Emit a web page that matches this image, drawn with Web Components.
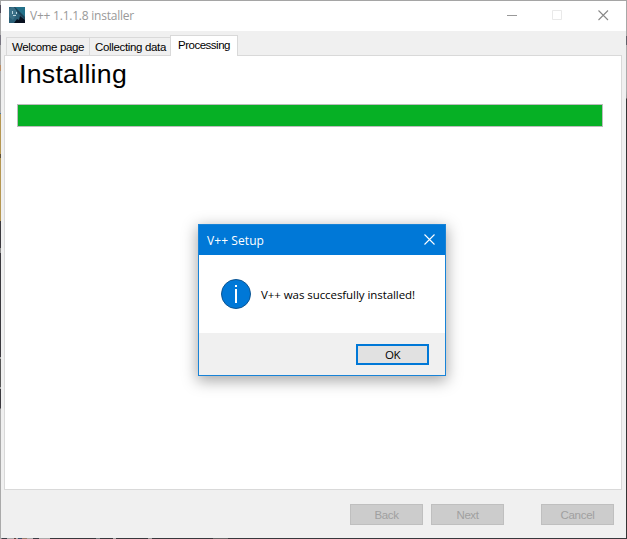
<!DOCTYPE html>
<html lang="en"><head><meta charset="utf-8"><title>V++ installer</title>
<style>
html,body{margin:0;width:627px;height:539px;overflow:hidden}
body{font-family:"Liberation Sans",Arial,sans-serif;font-size:11.5px;color:#000}
</style></head><body>
<installer-app></installer-app>
<script>
// Inline text set to a fixed advance width by adjusting its tracking.
customElements.define('fit-text', class extends HTMLElement{
  connectedCallback(){
    const r=this.attachShadow({mode:'open'});
    r.innerHTML=`<style>:host{display:inline-block;white-space:pre}span{display:inline-block}</style><span></span>`;
    const s=r.querySelector('span'); s.textContent=this.getAttribute('text');
    const w=+this.getAttribute('w'), n=s.textContent.length;
    this.style.width=w+'px';
    s.style.letterSpacing=((w-s.getBoundingClientRect().width)/n)+'px';
  }
});
customElements.define('push-button', class extends HTMLElement{
  connectedCallback(){
    this.attachShadow({mode:'open'}).innerHTML=`<style>
    :host{display:flex;box-sizing:border-box;width:73px;height:21px;align-items:center;justify-content:center;background:#ccc;border:1px solid #bfbfbf;color:#a0a0a0;line-height:19px;padding-top:1px}
    :host([primary]){background:#e1e1e1;border:2px solid #0078d7;color:#000;line-height:17px;padding-top:0}
    </style><slot></slot>`;
  }
});
customElements.define('app-logo', class extends HTMLElement{
  connectedCallback(){
    this.attachShadow({mode:'open'}).innerHTML=`<style>:host{display:block;width:16px;height:16px}svg{display:block}</style>
    <svg width="16" height="16" viewBox="0 0 16 16"><path fill="#2a5f77" d="M0 0h16v16H0z"/><path fill="#227089" d="M5 0h11v12z"/><path fill="#3b7087" d="M0 2l3-2h2l4 5-5 8-4-3z"/><path fill="#1d4358" d="M5 0h1l10 10v3l-7-7z"/><path fill="#08101f" d="M11 9l5 4v3H5l3-4 2 1z"/><path fill="#b9d4de" d="M3 4h1v3H3zM4 8h3v1H4zM7 5h1v2H7z"/></svg>`;
  }
});
customElements.define('tab-item', class extends HTMLElement{
  connectedCallback(){
    this.attachShadow({mode:'open'}).innerHTML=`<style>
    :host{display:block;box-sizing:border-box;height:18px;padding:2px 0 0 5px;border:1px solid #d9d9d9;border-bottom:0;background:#f0f0f0;line-height:14px}
    :host([active]){height:21px;background:#fff;margin-bottom:-1px;padding-left:7px;padding-top:2px;z-index:1}
    </style><slot></slot>`;
  }
});
customElements.define('message-dialog', class extends HTMLElement{
  connectedCallback(){
    this.attachShadow({mode:'open'}).innerHTML=`<style>
    :host{display:flex;flex-direction:column;box-sizing:border-box;width:248px;height:152px;border:1px solid #1883d7;background:#fff;box-shadow:0 4px 14px 1px rgba(0,0,0,.34);font-family:"Open Sans","Noto Sans",sans-serif}
    header{height:30px;background:#0078d7;color:#fff;display:flex;align-items:center;justify-content:space-between;padding:0 10px 0 8px;font-size:12px}
    header svg{margin-top:-2px}
    main{height:78px;display:flex;align-items:center;padding-left:22px;gap:10px;font-size:11.5px}
    main fit-text{padding-top:1px}
    footer{flex:1;background:#f0f0f0;display:flex;justify-content:flex-end;padding:11px 16px 0 0;font-size:11.5px}
    svg{display:block}
    </style>
    <header><fit-text text="V++ Setup" w="57"></fit-text>
    <svg width="11" height="11" viewBox="0 0 11 11"><path d="M.5.5l10 10M10.500.5l-10 10" stroke="#fff" stroke-width="1.100"/></svg></header>
    <main><svg width="30" height="30" viewBox="0 0 30 30"><circle cx="15" cy="15" r="14.500" fill="#0078d7" stroke="#0c5492"/><path fill="#fff" d="M14 10h2v14h-2zM14 6h2v2h-2z"/></svg>
    <fit-text text="V++ was succesfully installed!" w="154"></fit-text></main>
    <footer><push-button primary><fit-text text="OK" w="15"></fit-text></push-button></footer>`;
  }
});
customElements.define('installer-app', class extends HTMLElement{
  connectedCallback(){
    this.attachShadow({mode:'open'}).innerHTML=`<style>
    :host{display:flex;flex-direction:column;box-sizing:border-box;position:relative;width:627px;height:539px;padding:1px;
     background:
      linear-gradient(#a5a5a5,#a5a5a5) 0 0/100% 1px no-repeat,
      linear-gradient(#a8a8a8 0 36px,#5f6068 36px 45px,#aaa 45px 90px,#999 98px,#343434 99px) 100% 0/1px 100% no-repeat,
      linear-gradient(#a5a5a5 0 5px,#4f4c5b 5px 13px,#aaa 13px 35px,#777480 35px 45px,#aaa 45px 65px,#b98d65 65px 71px,#aaa 71px 113px,#4e79a1 113px 114px,#b59652 114px 154px,#625136 154px 158px,#b59652 158px 221px,#3b393e 221px 248px,#8e8e8e 248px 253px,#3b393e 253px 357px,#aaa 357px 359px,#555 359px 387px,#aaa 387px 389px,#3b393e 389px 408px,#aaa 409px) 0 0/1px 100% no-repeat,
      linear-gradient(90deg,#777 0 2px,#3c3c45 2px 7px,#aaa 7px 14px,#653f39 14px 16px,#aaa 16px 18px,#394e6a 18px 22px,#9a7d6d 22px 27px,#aaa 27px 33px,#3c3c45 33px 39px,#aaa 39px 50px,#38383c 50px 96px,#777f83 96px 100px,#38383c 100px 113px,#aaa 113px 116px,#38383c 116px 148px,#999 148px 152px,#38383c 152px 213px,#666 213px 228px,#38383c 228px) 0 100%/100% 1px no-repeat #f0f0f0}
    header{height:30px;flex:none;background:#fff;display:flex;align-items:center;padding-left:8px;gap:5px;color:#999;font:12px/20px "Open Sans","Noto Sans",sans-serif}
    header svg{margin-left:auto}
    header app-logo{margin-top:-2px}
    .body{flex:1;display:flex;flex-direction:column;background:#f0f0f0;padding:4px 4px 0 3px}
    nav{display:flex;align-items:flex-end;height:20px;padding-left:2px}
    nav tab-item+tab-item{margin-left:-1px}
    section{height:435px;box-sizing:border-box;border:1px solid #d9d9d9;background:#fff;padding:2px 18px 0 12px}
    h1{margin:0;padding-left:2px;height:46px;font-size:26.67px;font-weight:400;line-height:33px}
    .bar{height:23px;box-sizing:border-box;border:1px solid #bcbcbc;background:#06b025;width:586px}
    footer{display:flex;justify-content:flex-end;padding:14px 8px 0 0}
    .next{margin:0 37px 0 8px}
    message-dialog{position:absolute;left:198px;top:224px}
    </style>
    <header><app-logo></app-logo><fit-text text="V++ 1.1.1.8 installer" w="104"></fit-text>
    <svg width="119" height="30" viewBox="0 0 119 30" fill="none"><path d="M0 14.500h10" stroke="#999"/><path d="M45.500 9.500h9v9h-9z" stroke="#e9e9e9"/><path d="M91.500 9.500l9.500 9.500M101 9.500L91.500 19" stroke="#888" stroke-width="1.100"/></svg></header>
    <div class="body"><nav>
      <tab-item style="width:84px"><fit-text text="Welcome page" w="72"></fit-text></tab-item>
      <tab-item style="width:82px"><fit-text text="Collecting data" w="71"></fit-text></tab-item>
      <tab-item active style="width:68px"><fit-text text="Processing" w="52"></fit-text></tab-item></nav>
      <section><h1><fit-text text="Installing" w="108"></fit-text></h1><div class="bar"></div></section>
      <footer><push-button><fit-text text="Back" w="24"></fit-text></push-button><push-button class="next"><fit-text text="Next" w="22"></fit-text></push-button><push-button><fit-text text="Cancel" w="34"></fit-text></push-button></footer>
    </div>
    <message-dialog></message-dialog>`;
  }
});
</script></body></html>
